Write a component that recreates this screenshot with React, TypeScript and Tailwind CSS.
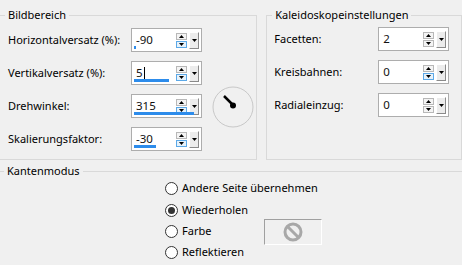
import React from 'react';

const font = { fontFamily: '"Noto Sans", "Open Sans", sans-serif' };

function Spin({ value, bar, downHot, caret }: { value: string; bar?: number; downHot?: boolean; caret?: boolean }) {
  return (
    <div className="relative flex h-[24px] w-[71px] items-center border border-[#adadad] bg-white">
      <span className="ml-[4px] flex flex-1 items-center text-[11.5px] leading-none text-[#111]">
        {value}
        {caret && <span className="ml-px h-[13px] w-px bg-black" />}
      </span>
      <div className="mr-[2px] flex flex-col gap-px">
        <div className="flex h-[7px] w-[11px] items-center justify-center border border-[#b8b8b8] bg-[#f4f4f4]">
          <svg width="5" height="3" viewBox="0 0 5 3"><path d="M0 3 L2.5 0 L5 3 Z" fill="#000" /></svg>
        </div>
        <div
          className={`flex h-[7px] w-[11px] items-center justify-center border ${downHot ? 'border-[#5ca9e8] bg-[#e6f2fb]' : 'border-[#b8b8b8] bg-[#f4f4f4]'}`}
        >
          <svg width="5" height="3" viewBox="0 0 5 3"><path d="M0 0 L5 0 L2.5 3 Z" fill="#000" /></svg>
        </div>
      </div>
      <div className="mr-[2px] flex h-[17px] w-[10px] items-center justify-center border border-b-[#8a8a8a] border-l-white border-r-[#8a8a8a] border-t-white bg-[#ececec]">
        <svg width="5" height="3" viewBox="0 0 5 3"><path d="M0 0 L5 0 L2.5 3 Z" fill="#000" /></svg>
      </div>
      {bar !== undefined && (
        <div className="absolute bottom-[2px] left-[2px] h-[3px] bg-[#2d8ceb]" style={{ width: `${bar}px` }} />
      )}
    </div>
  );
}

function Row({ label, labelW, children }: { label: string; labelW: string; children: React.ReactNode }) {
  return (
    <div className="flex items-center">
      <span className={`${labelW} text-[11px] text-black`}>{label}</span>
      {children}
    </div>
  );
}

function Dial() {
  return (
    <svg width="42" height="42" viewBox="0 0 42 42">
      <circle cx="21" cy="21" r="20" fill="none" stroke="#c8c8c8" strokeWidth="1" />
      <line x1="12" y1="10" x2="21" y2="19" stroke="#000" strokeWidth="2.5" />
      <circle cx="21" cy="19.5" r="3" fill="#000" />
    </svg>
  );
}

function Radio({ label, checked }: { label: string; checked?: boolean }) {
  return (
    <div className="flex items-center gap-[4px]">
      <span className="flex h-[13px] w-[13px] items-center justify-center rounded-full border border-[#333] bg-white">
        {checked && <span className="h-[7px] w-[7px] rounded-full bg-[#333]" />}
      </span>
      <span className="text-[11px] text-black">{label}</span>
    </div>
  );
}

export default function App() {
  return (
    <div className="h-[265px] w-[462px] overflow-hidden bg-[#f0f0f0]" style={font}>
      <div className="flex pt-[15px]">
        <div className="relative -ml-px h-[145px] w-[264px] border border-[#d9d9d9]">
          <span className="absolute -top-[9px] left-[5px] bg-[#f0f0f0] px-[3px] text-[11px] text-black">Bildbereich</span>
          <div className="flex pl-[8px] pt-[12px]">
            <div className="flex flex-col gap-[9px]">
              <Row label="Horizontalversatz (%):" labelW="w-[123px]">
                <Spin value="-90" bar={2} downHot />
              </Row>
              <Row label="Vertikalversatz (%):" labelW="w-[123px]">
                <Spin value="5" bar={35} downHot caret />
              </Row>
              <Row label="Drehwinkel:" labelW="w-[123px]">
                <Spin value="315" bar={60} downHot />
              </Row>
              <Row label="Skalierungsfaktor:" labelW="w-[123px]">
                <Spin value="-30" bar={22} downHot />
              </Row>
            </div>
            <div className="ml-[10px] mt-[58px]">
              <Dial />
            </div>
          </div>
        </div>
        <div className="relative ml-[9px] h-[145px] w-[200px] border border-[#d9d9d9]">
          <span className="absolute -top-[9px] left-[5px] bg-[#f0f0f0] px-[3px] text-[11px] text-black">Kaleidoskopeinstellungen</span>
          <div className="flex flex-col gap-[9px] pl-[7px] pt-[11px]">
            <Row label="Facetten:" labelW="w-[104px]">
              <Spin value="2" />
            </Row>
            <Row label="Kreisbahnen:" labelW="w-[104px]">
              <Spin value="0" downHot />
            </Row>
            <Row label="Radialeinzug:" labelW="w-[104px]">
              <Spin value="0" />
            </Row>
          </div>
        </div>
      </div>
      <div className="relative mt-[11px] -ml-px h-[120px] w-[470px] border-t border-[#d9d9d9]">
        <span className="absolute -top-[9px] left-[5px] bg-[#f0f0f0] px-[3px] text-[11px] text-black">Kantenmodus</span>
        <div className="flex flex-col pl-[166px] pt-[4px]">
          <div className="flex h-[24px] items-center">
            <Radio label="Andere Seite übernehmen" />
          </div>
          <div className="flex h-[21px] items-center">
            <Radio label="Wiederholen" checked />
          </div>
          <div className="flex h-[21px] items-center">
            <div className="w-[99px]">
              <Radio label="Farbe" />
            </div>
            <div className="flex h-[26px] w-[58px] items-center justify-center border border-b-white border-l-[#a0a0a0] border-r-white border-t-[#a0a0a0] bg-[#f0f0f0]">
              <svg width="20" height="20" viewBox="0 0 20 20">
                <circle cx="10" cy="10" r="8" fill="none" stroke="#a8a8a8" strokeWidth="3" />
                <line x1="4.5" y1="4.5" x2="15.5" y2="15.5" stroke="#a8a8a8" strokeWidth="3" />
              </svg>
            </div>
          </div>
          <div className="flex h-[21px] items-center">
            <Radio label="Reflektieren" />
          </div>
        </div>
      </div>
    </div>
  );
}
